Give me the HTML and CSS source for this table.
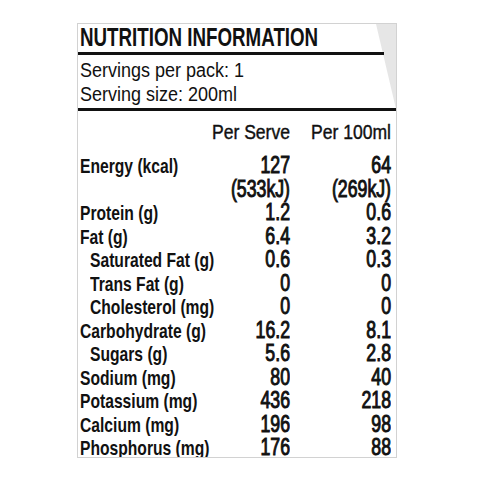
FILE: index.html
```html
<!DOCTYPE html>
<html lang="en">
<head>
    <meta charset="UTF-8">
    <title>Nutrition Information</title>
    <link rel="stylesheet" href="styles.css">
</head>
<body>
    <div class="panel">
        <div class="fold"></div>
        <div class="title-bar">
            <h1 class="title">NUTRITION INFORMATION</h1>
        </div>
        <div class="servings">
            <div class="line">Servings per pack: 1</div>
            <div class="line">Serving size: 200ml</div>
        </div>
        <div class="facts">
            <span></span><span class="head">Per Serve</span><span class="head">Per 100ml</span>

            <span class="label">Energy (kcal)</span><span class="num">127</span><span class="num">64</span>
            <span></span><span class="num">(533kJ)</span><span class="num">(269kJ)</span>
            <span class="label">Protein (g)</span><span class="num">1.2</span><span class="num">0.6</span>
            <span class="label">Fat (g)</span><span class="num">6.4</span><span class="num">3.2</span>
            <span class="label sub">Saturated Fat (g)</span><span class="num">0.6</span><span class="num">0.3</span>
            <span class="label sub">Trans Fat (g)</span><span class="num">0</span><span class="num">0</span>
            <span class="label sub">Cholesterol (mg)</span><span class="num">0</span><span class="num">0</span>
            <span class="label">Carbohydrate (g)</span><span class="num">16.2</span><span class="num">8.1</span>
            <span class="label sub">Sugars (g)</span><span class="num">5.6</span><span class="num">2.8</span>
            <span class="label">Sodium (mg)</span><span class="num">80</span><span class="num">40</span>
            <span class="label">Potassium (mg)</span><span class="num">436</span><span class="num">218</span>
            <span class="label">Calcium (mg)</span><span class="num">196</span><span class="num">98</span>
            <span class="label">Phosphorus (mg)</span><span class="num">176</span><span class="num">88</span>
        </div>
    </div>
</body>
</html>
```

FILE: styles.css
```css
/* Condensed type is faked with scaleX on Liberation Sans (Arial widths) */
body {
    margin: 0;
    background: #fff;
    color: #111;
    font-family: "Liberation Sans", Arial, sans-serif;
}
.panel {
    position: relative;
    width: 318px;
    height: 433px;
    margin: 23px 0 0 77px;
    border: 1px solid #d2d2d2;
    overflow: hidden;
    background: #fff;
}
.fold {
    position: absolute;
    top: 0;
    right: 0;
    width: 20px;
    height: 85px;
    background: #e6e6e6;
    clip-path: polygon(0 0, 100% 0, 100% 100%);
}
.title-bar {
    position: relative;
    margin-right: 12px;
    padding-bottom: 1px;
    border-bottom: 3px solid #111;
}
.title {
    margin: 0 0 0 2px;
    font-size: 25px;
    font-weight: bold;
    line-height: 27px;
    white-space: nowrap;
    transform: scaleX(0.75);
    transform-origin: left;
}
.servings {
    position: relative;
    padding: 3px 0 2px 2px;
    border-bottom: 3px solid #111;
}
.servings .line {
    font-size: 20px;
    line-height: 24px;
    white-space: nowrap;
    transform: scaleX(0.9);
    transform-origin: left;
}
.facts {
    display: grid;
    grid-template-columns: minmax(0, 1fr) 90px 101px;
    align-items: baseline;
    padding: 9px 5px 0 2px;
    line-height: 23.5px;
    white-space: nowrap;
}
.facts .head {
    font-size: 19.5px;
    line-height: 24px;
    padding-bottom: 10px;
    text-align: right;
    -webkit-text-stroke: 0.4px #111;
    transform: scaleX(0.9);
    transform-origin: right;
}
.label {
    font-size: 21px;
    font-weight: bold;
    transform: scaleX(0.745);
    transform-origin: left;
}
.sub {
    margin-left: 10px;
}
.num {
    font-size: 23px;
    text-align: right;
    -webkit-text-stroke: 1px #111;
    transform: scaleX(0.77);
    transform-origin: right;
}
```
